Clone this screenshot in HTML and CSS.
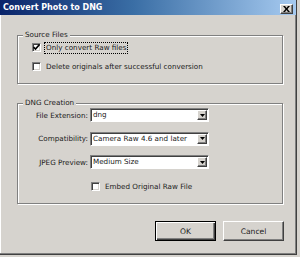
FILE: index.html
```html
<!DOCTYPE html>
<html>
<head>
<meta charset="utf-8">
<link rel="stylesheet" href="styles.css">
</head>
<body>
<div class="window">
  <div class="titlebar">
    <span class="title">Convert Photo to DNG</span>
    <span class="close"><svg width="7" height="6" viewBox="0 0 7 6"><path d="M0 0h2l1.5 2 1.5-2h2l-2.5 3 2.5 3h-2l-1.5-2-1.5 2h-2l2.5-3z" fill="#000"/></svg></span>
  </div>
  <div class="content">
    <div class="group group-source">
      <div class="legend">Source Files</div>
      <label class="check-row row-first">
        <span class="box checked"><svg width="7" height="7" viewBox="0 0 7 7"><path d="M0.5 3l2 2 4-4.5" fill="none" stroke="#000" stroke-width="1.6"/></svg></span>
        <span class="focus">Only convert Raw files</span>
      </label>
      <label class="check-row row-second">
        <span class="box"></span>
        <span class="text">Delete originals after successful conversion</span>
      </label>
    </div>
    <div class="group group-dng">
      <div class="legend">DNG Creation</div>
      <div class="field">
        <span class="field-label">File Extension:</span>
        <span class="select"><span class="value">dng</span><span class="arrow"><svg width="5" height="3" viewBox="0 0 5 3"><path d="M0 0h5l-2.5 3z" fill="#000"/></svg></span></span>
      </div>
      <div class="field">
        <span class="field-label">Compatibility:</span>
        <span class="select"><span class="value">Camera Raw 4.6 and later</span><span class="arrow"><svg width="5" height="3" viewBox="0 0 5 3"><path d="M0 0h5l-2.5 3z" fill="#000"/></svg></span></span>
      </div>
      <div class="field">
        <span class="field-label">JPEG Preview:</span>
        <span class="select"><span class="value">Medium Size</span><span class="arrow"><svg width="5" height="3" viewBox="0 0 5 3"><path d="M0 0h5l-2.5 3z" fill="#000"/></svg></span></span>
      </div>
      <label class="check-row row-embed">
        <span class="box"></span>
        <span class="text">Embed Original Raw File</span>
      </label>
    </div>
    <div class="buttons">
      <button class="btn btn-default">OK</button>
      <button class="btn">Cancel</button>
    </div>
  </div>
</div>
</body>
</html>
```
FILE: styles.css
```css
html, body {
  margin: 0;
  padding: 0;
  background: #d6d3ce;
}
body {
  width: 300px;
  height: 257px;
  overflow: hidden;
  font-family: "DejaVu Sans", sans-serif;
  font-size: 7.2px;
  color: #1a1a1a;
}
.window {
  width: 297px;
  height: 255px;
  box-sizing: border-box;
  background: #d6d3ce;
  border-right: 1px solid #404040;
  border-bottom: 1px solid #404040;
  box-shadow: inset -1px -1px 0 #808080, inset 1px 0 0 #ffffff;
  display: flex;
  flex-direction: column;
}
.titlebar {
  height: 15px;
  flex: none;
  background: linear-gradient(to right, #0a246a 0%, #3a6ea5 45%, #a6caf0 100%);
  display: flex;
  align-items: center;
  justify-content: space-between;
  padding: 0 3px 0 3px;
}
.title {
  color: #fff;
  font-weight: bold;
  font-size: 8px;
  font-family: "DejaVu Sans", sans-serif;
}
.close {
  width: 13px;
  height: 10px;
  margin-top: 3px;
  box-sizing: border-box;
  background: #d6d3ce;
  border: 1px solid;
  border-color: #fff #404040 #404040 #fff;
  box-shadow: inset -1px -1px 0 #808080;
  display: flex;
  align-items: center;
  justify-content: center;
}
.close svg { display: block; }
.content {
  padding: 20px 0 0 17px;
  display: flex;
  flex-direction: column;
}
.group {
  width: 266px;
  box-sizing: border-box;
  border: 1px solid #808080;
  box-shadow: inset 1px 1px 0 #fff, 1px 1px 0 #fff;
  display: flex;
  flex-direction: column;
}
.group-source {
  height: 49px;
}
.group-dng {
  height: 101px;
  margin-top: 19px;
}
.legend {
  align-self: flex-start;
  margin: -6px 0 0 5px;
  padding: 0 2px;
  background: #d6d3ce;
  line-height: 10px;
  height: 10px;
}
.check-row {
  display: flex;
  align-items: center;
  height: 11px;
}
.row-first {
  margin: 2px 0 0 14px;
}
.row-second {
  margin: 8px 0 0 14px;
}
.row-embed {
  margin: 12px 0 0 73px;
}
.box {
  width: 9px;
  height: 9px;
  box-sizing: border-box;
  background: #fff;
  border: 1px solid;
  border-color: #808080 #fff #fff #808080;
  box-shadow: inset 1px 1px 0 #404040, inset -1px -1px 0 #d6d3ce;
  display: flex;
  align-items: center;
  justify-content: center;
  flex: none;
}
.box svg { display: block; }
.focus {
  margin-left: 4px;
  padding: 0 1px;
  outline: 1px dotted #000;
  outline-offset: 0;
  line-height: 10px;
}
.text {
  margin-left: 5px;
  line-height: 10px;
}
.field {
  display: flex;
  align-items: center;
  height: 14px;
}
.field:nth-of-type(1) { margin-top: 1px; }
.field + .field { margin-top: 9.5px; }
.field-label {
  width: 70px;
  text-align: right;
  padding-right: 2px;
}
.select {
  width: 119px;
  height: 14px;
  box-sizing: border-box;
  background: #fff;
  border: 1px solid;
  border-color: #808080 #fff #fff #808080;
  box-shadow: inset 1px 1px 0 #404040;
  display: flex;
  align-items: center;
  justify-content: space-between;
  padding: 1px 1px 1px 2px;
}
.value {
  line-height: 10px;
}
.arrow {
  width: 10px;
  height: 10px;
  box-sizing: border-box;
  background: #d6d3ce;
  border: 1px solid;
  border-color: #fff #404040 #404040 #fff;
  box-shadow: inset -1px -1px 0 #808080;
  display: flex;
  align-items: center;
  justify-content: center;
}
.arrow svg { display: block; }
.buttons {
  display: flex;
  gap: 7px;
  margin: 17px 0 0 138px;
}
.btn {
  width: 61px;
  height: 20px;
  box-sizing: border-box;
  background: #d6d3ce;
  font-family: "DejaVu Sans", sans-serif;
  font-size: 7.6px;
  color: #1a1a1a;
  border: 1px solid;
  border-color: #fff #404040 #404040 #fff;
  box-shadow: inset -1px -1px 0 #808080;
  padding: 0;
}
.btn-default {
  border: 1px solid #000;
  box-shadow: inset 1px 1px 0 #fff, inset -1px -1px 0 #404040, inset -2px -2px 0 #808080;
}
```
